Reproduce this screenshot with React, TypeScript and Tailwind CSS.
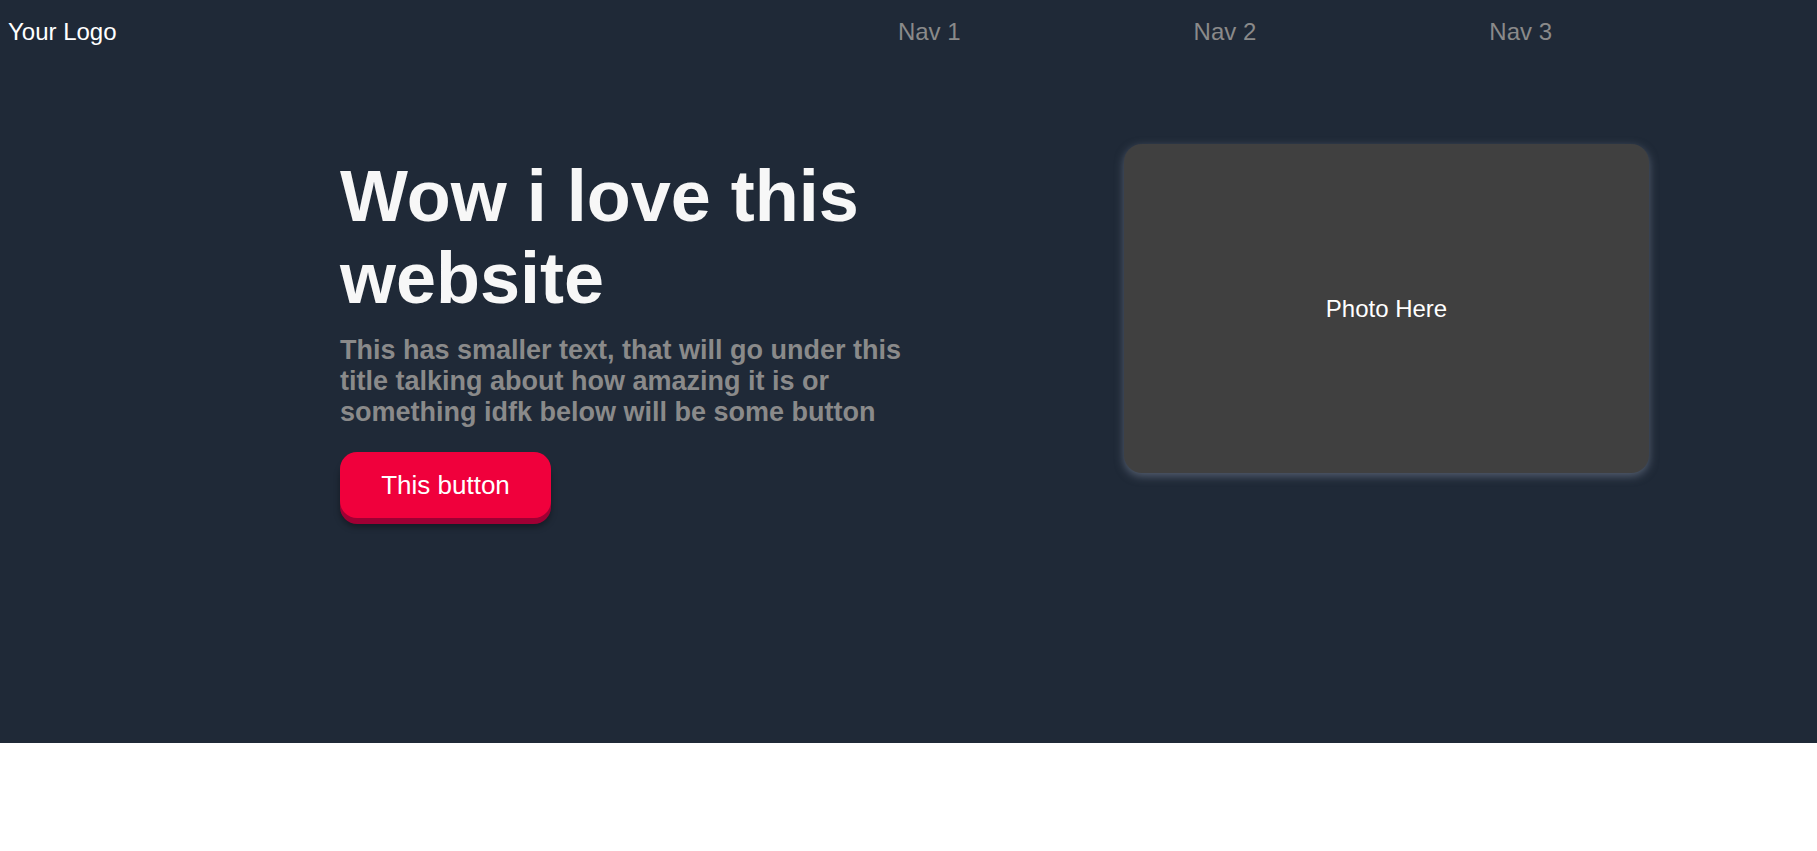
import React from 'react'

export default function App() {
  return (
    <div className="min-h-screen bg-white font-['Liberation_Sans',Arial,sans-serif]">
      <div className="h-[743px] bg-[#1f2937]">
        {/* Navigation */}
        <nav className="flex h-[63px] items-center pl-2">
          <h1 className="text-[24px] leading-[normal] text-white">Your Logo</h1>
          <ul className="ml-auto mr-[265px] flex gap-[233px] text-[24px] leading-[normal] text-[#8a8a8a]">
            <li>Nav 1</li>
            <li>Nav 2</li>
            <li>Nav 3</li>
          </ul>
        </nav>

        {/* Hero */}
        <section className="flex items-start pl-[340px] pt-[81px]">
          <div className="mt-[11px] w-[580px]">
            <h2 className="text-[72px] font-bold leading-[normal] text-[#f7f7f7]">
              Wow i love this website
            </h2>
            <p className="mt-4 text-[27px] font-bold leading-[normal] text-[#8a8a8a]">
              This has smaller text, that will go under this title talking about how amazing it is or
              something idfk below will be some button
            </p>
            <button className="mt-6 h-[66px] w-[211px] rounded-[17px] bg-[#f0003c] text-[26px] text-white shadow-[0_6px_0_#9f0034,0_9px_6px_rgba(0,0,0,0.35)]">
              This button
            </button>
          </div>
          <div className="ml-[204px] flex h-[329px] w-[525px] items-center justify-center rounded-[18px] bg-[#404040] text-[24px] text-white shadow-[0_3px_10px_rgba(140,150,170,0.5)]">
            Photo Here
          </div>
        </section>
      </div>
    </div>
  )
}
